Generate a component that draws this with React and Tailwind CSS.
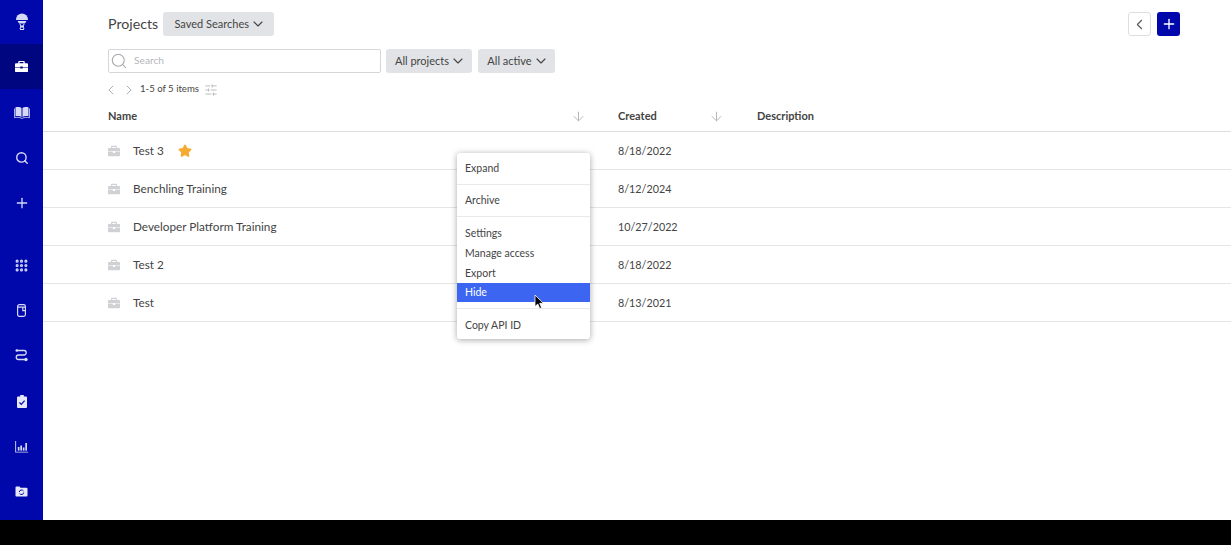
import React from 'react';
import { ChevronDown, ChevronLeft, ChevronRight, Search, Plus, ArrowDown, SlidersHorizontal, Grip, Star } from 'lucide-react';

function Briefcase({ size = 14, className = '' }) {
  return (
    <svg width={size} height={size} viewBox="0 0 14 14" className={className} fill="currentColor">
      <path d="M4.500 1h5a1 1 0 0 1 1 1v1.500h2.500a1 1 0 0 1 1 1v3.200H8.300V7H5.700v.7H0V4.500a1 1 0 0 1 1-1h2.500V2a1 1 0 0 1 1-1Zm.4 1.200v1.300h4.200V2.200H4.900Z" fillRule="evenodd" />
      <path d="M0 8.300h5.700V9.200h2.600v-.9H14V12a1 1 0 0 1-1 1H1a1 1 0 0 1-1-1V8.300Z" />
    </svg>
  );
}

function Logo() {
  return (
    <svg width="14" height="18" viewBox="0 0 14 18" fill="none" className="text-[#d5d9f5]">
      <path d="M1 6.500a6 6 0 0 1 12 0V7H1v-.5Z" fill="currentColor" />
      <path d="M2.500 8h9L10 10.500H4L2.500 8Z" fill="currentColor" />
      <path d="M5 11c0 2.500 4 2.500 4 5M9 11c0 2.500-4 2.500-4 5M5 13.500h4M5 16.500h4" stroke="currentColor" strokeWidth="1.100" />
    </svg>
  );
}

function BookIcon() {
  return (
    <svg width="16" height="13" viewBox="0 0 16 13" fill="currentColor">
      <path d="M1.500 1.200c2.100-.5 4.500-.5 6 .7v9c-1.500-1-3.900-1.100-6-.6V1.200Z" />
      <path d="M14.500 1.200c-2.100-.5-4.500-.5-6 .7v9c1.500-1 3.900-1.100 6-.6V1.200Z" />
      <path d="M.5 2.500v9.200c2.600-.5 5.300-.4 7.500.7 2.200-1.100 4.900-1.200 7.500-.7V2.500" stroke="currentColor" strokeWidth=".8" fill="none" />
    </svg>
  );
}

function SamplesIcon() {
  return (
    <svg width="9" height="13" viewBox="0 0 9 13" fill="none" stroke="currentColor" strokeWidth="1.200">
      <rect x=".6" y=".6" width="7.800" height="11.800" rx="1.800" />
      <path d="M.6 3.200h7.800M5.800 3.200v3.500h2.600" />
    </svg>
  );
}

function RouteIcon() {
  return (
    <svg width="13" height="13" viewBox="0 0 13 13" fill="none" stroke="currentColor" strokeWidth="1.300">
      <path d="M1.500 1.500h7.500a2.250 2.250 0 0 1 0 4.500h-5.500a2.250 2.250 0 0 0 0 4.500h7" />
      <circle cx="1.800" cy="1.500" r="1.300" fill="currentColor" stroke="none" />
      <circle cx="11" cy="10.500" r="1.700" fill="currentColor" stroke="none" />
    </svg>
  );
}

function ClipboardIcon() {
  return (
    <svg width="10" height="13" viewBox="0 0 10 13">
      <path d="M3.200 0h3.600v1.600H9a1 1 0 0 1 1 1V12a1 1 0 0 1-1 1H1a1 1 0 0 1-1-1V2.600a1 1 0 0 1 1-1h2.200V0Z" fill="#e6e8fa" />
      <path d="M2.500 7.500 4.300 9.300 7.600 5.700" fill="none" stroke="#0008ac" strokeWidth="1.200" />
    </svg>
  );
}

function ChartIcon() {
  return (
    <svg width="13" height="12" viewBox="0 0 13 12" fill="currentColor">
      <path d="M.2 0v11.600H13v-.9H1.100V0H.2Z" />
      <rect x="2.800" y="6" width="1.700" height="3.600" />
      <rect x="5.300" y="4.500" width="1.700" height="5.100" />
      <rect x="7.800" y="6.500" width="1.700" height="3.100" />
      <rect x="10.300" y="2" width="1.700" height="7.600" />
    </svg>
  );
}

function FolderIcon() {
  return (
    <svg width="13" height="11" viewBox="0 0 13 11">
      <path d="M.5 1.500a1 1 0 0 1 1-1h3l1 1.300h6a1 1 0 0 1 1 1v6.700a1 1 0 0 1-1 1h-10a1 1 0 0 1-1-1v-8Z" fill="#e6e8fa" />
      <path d="M4.300 6a2.300 2.300 0 0 1 4.200-1M8.800 6.500a2.300 2.300 0 0 1-4.200 1" fill="none" stroke="#0008ac" strokeWidth="1" />
    </svg>
  );
}

const railClass = 'flex w-full items-center justify-center text-[#d5d9f5]';

function Sidebar() {
  return (
    <nav className="flex h-full w-[43px] shrink-0 flex-col bg-[#0008ac]">
      <div className={`${railClass} h-11`}><Logo /></div>
      <div className={`${railClass} h-[45px] bg-[#000580] text-white`}><Briefcase size={13} /></div>
      <div className={`${railClass} h-[46px]`}><BookIcon /></div>
      <div className={`${railClass} h-[45px]`}><Search size={14} strokeWidth={2.4} /></div>
      <div className={`${railClass} h-[46px]`}><Plus size={16} strokeWidth={2} /></div>
      <div className={`${railClass} mt-[16px] h-[46px]`}><Grip size={15} strokeWidth={3} /></div>
      <div className={`${railClass} h-[45px]`}><SamplesIcon /></div>
      <div className={`${railClass} h-[45px]`}><RouteIcon /></div>
      <div className={`${railClass} h-[46px]`}><ClipboardIcon /></div>
      <div className={`${railClass} h-[45px]`}><ChartIcon /></div>
      <div className={`${railClass} h-[45px]`}><FolderIcon /></div>
    </nav>
  );
}

function FilterButton({ label, className = '' }) {
  return (
    <button className={`flex h-6 items-center justify-center gap-[1px] rounded-[3px] bg-[#e1e3e6] pl-[3px] text-[11px] text-[#444] ${className}`}>
      {label}
      <ChevronDown size={16} strokeWidth={1.7} />
    </button>
  );
}

const projects = [
  { name: 'Test 3', created: '8/18/2022', starred: true },
  { name: 'Benchling Training', created: '8/12/2024' },
  { name: 'Developer Platform Training', created: '10/27/2022' },
  { name: 'Test 2', created: '8/18/2022' },
  { name: 'Test', created: '8/13/2021' },
];

function ContextMenu() {
  const item = 'flex h-5 items-center px-2 text-[10.5px] text-[#444]';
  return (
    <div className="absolute left-[414px] top-[153px] w-[133px] rounded-[3px] bg-white pb-[3px] pt-[5px] shadow-[0_1px_6px_rgba(0,0,0,0.35)]">
      <div className={`${item} mt-[1px]`}>Expand</div>
      <div className="mb-[6px] mt-[5px] border-t border-[#e8e9eb]" />
      <div className={item}>Archive</div>
      <div className="mb-[7px] mt-[5px] border-t border-[#e8e9eb]" />
      <div className={item}>Settings</div>
      <div className={item}>Manage access</div>
      <div className="flex h-[19px] items-center px-2 text-[10.5px] text-[#444]">Export</div>
      <div className="flex h-[19px] items-center bg-[#3c66f2] px-2 text-[10.5px] text-white">Hide</div>
      <div className="mb-[7px] mt-[6px] border-t border-[#e8e9eb]" />
      <div className={item}>Copy API ID</div>
      <svg width="11" height="16" viewBox="0 0 11 16" className="absolute left-[77px] top-[141px]">
        <path d="M1 1v11.500l2.800-2.500 1.900 4.500 1.900-.8-1.900-4.400h3.700L1 1Z" fill="#000" stroke="#fff" strokeWidth=".8" />
      </svg>
    </div>
  );
}

export default function App() {
  return (
    <div className="flex h-[545px] w-[1231px] flex-col overflow-hidden bg-black font-['Lato','Open_Sans',sans-serif]">
      <div className="flex h-[520px]">
        <Sidebar />
        <main className="relative flex-1 bg-white">
          <header className="flex items-center pl-[65px] pr-[51px] pt-3">
            <h1 className="text-[14.2px] text-[#444]">Projects</h1>
            <FilterButton label="Saved Searches" className="ml-[5px] w-[111px]" />
            <div className="ml-auto flex gap-[6px]">
              <button className="flex h-6 w-[23px] items-center justify-center rounded-[3px] border border-[#dcdee1] text-[#555]">
                <ChevronLeft size={17} strokeWidth={1.5} />
              </button>
              <button className="flex h-6 w-[23px] items-center justify-center rounded-[3px] bg-[#0008ac] text-white">
                <Plus size={16} strokeWidth={2} />
              </button>
            </div>
          </header>

          <div className="mt-[13px] flex pl-[65px]">
            <div className="flex h-6 w-[273px] items-center rounded-[2px] border border-[#d4d6d9] pl-[1px]">
              <Search size={18} strokeWidth={1.4} className="text-[#a5a8ac]" />
              <span className="ml-[6px] text-[10.2px] text-[#b5b7ba]">Search</span>
            </div>
            <FilterButton label="All projects" className="ml-[5px] w-[86px]" />
            <FilterButton label="All active" className="ml-[6px] w-[77px]" />
          </div>

          <div className="mt-[9px] flex h-[15px] items-center pl-[60px] text-[9.6px] text-[#444]">
            <ChevronLeft size={16} strokeWidth={1.4} className="text-[#a5a8ac]" />
            <ChevronRight size={16} strokeWidth={1.4} className="ml-[2px] text-[#a5a8ac]" />
            <span className="ml-[3px]">1-5 of 5 items</span>
            <SlidersHorizontal size={14} strokeWidth={1.3} className="ml-[5px] text-[#a5a8ac]" />
          </div>

          <div className="mt-[9px] flex h-[26px] items-center border-b border-[#dcdee1] pb-[4px] pl-[65px] text-[11px] font-bold text-[#444]">
            <span className="w-[463px]">Name</span>
            <ArrowDown size={15} strokeWidth={1.6} className="text-[#b5b7ba]" />
            <span className="ml-[32px] w-[91px]">Created</span>
            <ArrowDown size={15} strokeWidth={1.6} className="text-[#b5b7ba]" />
            <span className="ml-[33px]">Description</span>
          </div>

          {projects.map((p) => (
            <div key={p.name} className="flex h-[38px] items-center border-b border-[#e4e5e7] pl-[65px] pt-[1px] text-[11.75px] text-[#444]">
              <Briefcase size={12} className="text-[#cfd1d4]" />
              <div className="ml-[13px] flex w-[485px] items-center">
                <span>{p.name}</span>
                {p.starred && <Star size={14} className="ml-[14px] fill-[#f5ab2f] text-[#f5ab2f]" />}
              </div>
              <span className="text-[10.75px]">{p.created}</span>
            </div>
          ))}

          <ContextMenu />
        </main>
      </div>
      <div className="h-[25px] bg-black" />
    </div>
  );
}
